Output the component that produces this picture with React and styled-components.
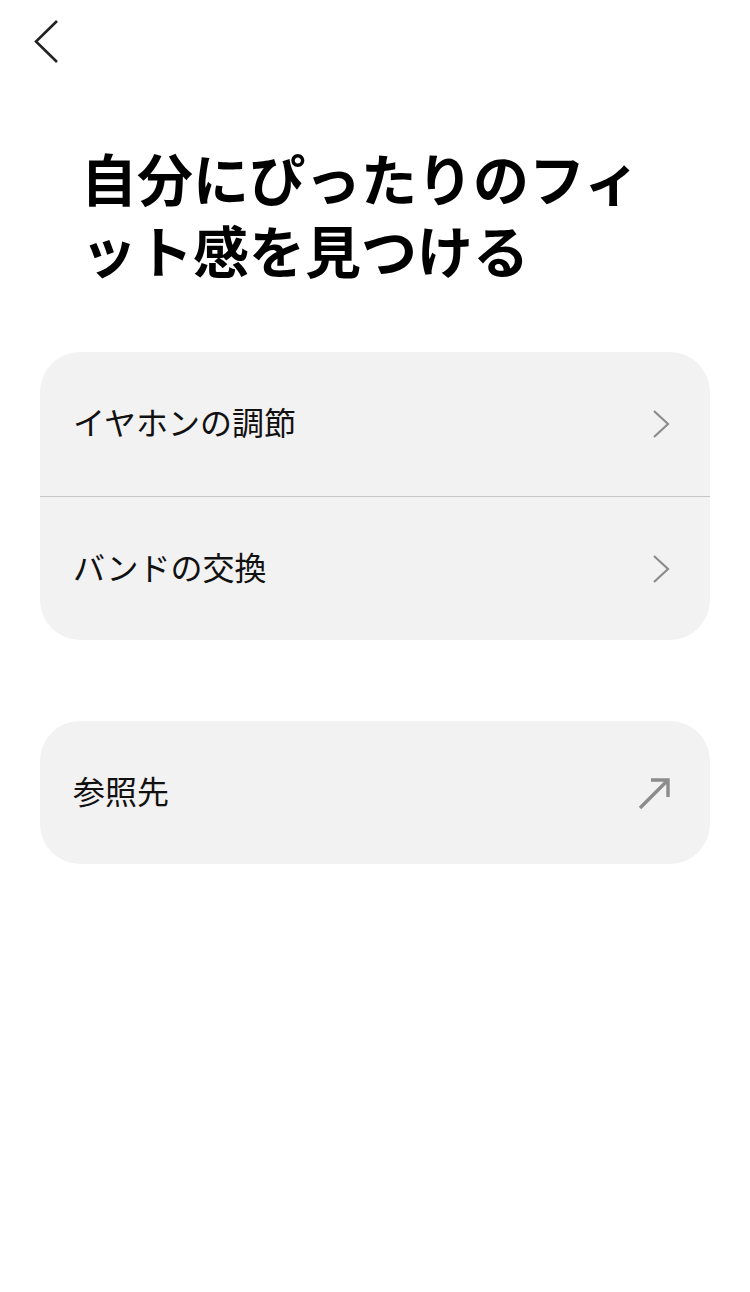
import styled, { createGlobalStyle } from "styled-components";

const GlobalStyle = createGlobalStyle`
  html, body {
    margin: 0;
    padding: 0;
    background: #fff;
  }
  body {
    font-family: "Noto Sans CJK JP", "Noto Sans", sans-serif;
    color: #000;
  }
`;

const Page = styled.div`
  width: 750px;
  min-height: 1292px;
  background: #fff;
  display: flex;
  flex-direction: column;
`;

const TopBar = styled.div`
  height: 84px;
  display: flex;
  align-items: flex-start;
  padding: 18px 0 0 32px;
  box-sizing: border-box;
`;

const BackButton = styled.button`
  width: 32px;
  height: 48px;
  padding: 0;
  border: none;
  background: none;
  cursor: pointer;
`;

const Title = styled.h1`
  margin: 57px 0 0 81px;
  width: 590px;
  font-size: 56px;
  line-height: 72px;
  font-weight: 700;
  letter-spacing: 0;
`;

const Card = styled.div`
  margin: ${(p) => p.$top}px 40px 0;
  background: #f2f2f2;
  border-radius: 40px;
  overflow: hidden;
`;

const Row = styled.div`
  height: ${(p) => p.$height || 144}px;
  display: flex;
  align-items: center;
  justify-content: space-between;
  padding: 0 ${(p) => p.$right || 34}px 0 33px;
  box-sizing: border-box;
  border-top: ${(p) => (p.$divider ? "1px solid #c6c6c6" : "none")};
  cursor: pointer;
`;

const Label = styled.span`
  font-size: 32px;
  line-height: 40px;
  margin-bottom: 6px;
  color: #111;
`;

const Chevron = () => (
  <svg width="30" height="34" viewBox="0 0 30 34">
    <path d="M8 4 L22 17 L8 30" fill="none" stroke="#8c8c8c" strokeWidth="2.2" />
  </svg>
);

const ExternalArrow = () => (
  <svg width="40" height="40" viewBox="0 0 40 40">
    <path d="M5 35 L33 7 M16 7 L33 7 L33 24" fill="none" stroke="#8c8c8c" strokeWidth="3.4" />
  </svg>
);

const items = ["イヤホンの調節", "バンドの交換"];

const App = () => (
  <Page>
    <GlobalStyle />
    <TopBar>
      <BackButton aria-label="戻る">
        <svg width="32" height="48" viewBox="0 0 32 48">
          <path d="M25 3 L4 23.5 L25 44" fill="none" stroke="#222" strokeWidth="2.6" />
        </svg>
      </BackButton>
    </TopBar>
    <Title>自分にぴったりのフィット感を見つける</Title>
    <Card $top={67}>
      {items.map((t, i) => (
        <Row key={t} $divider={i > 0}>
          <Label>{t}</Label>
          <Chevron />
        </Row>
      ))}
    </Card>
    <Card $top={81}>
      <Row $height={143} $right={35}>
        <Label>参照先</Label>
        <ExternalArrow />
      </Row>
    </Card>
  </Page>
);

export default App;
